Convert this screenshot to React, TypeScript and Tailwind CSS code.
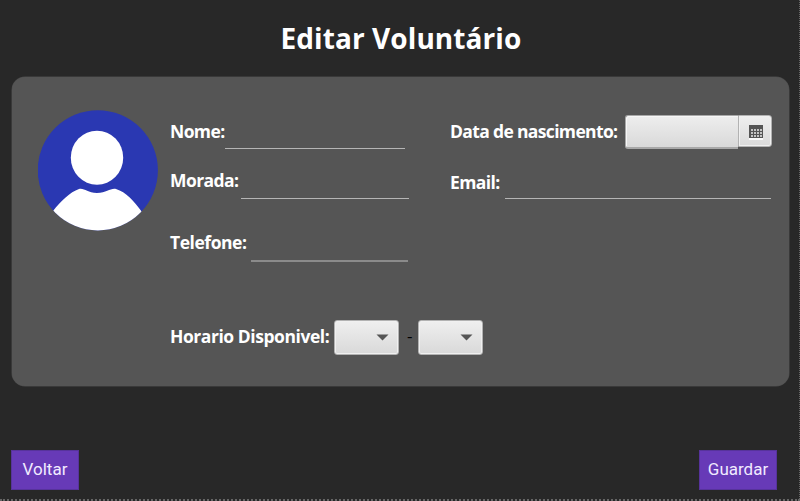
import type { ReactNode } from "react";

const labelFont = "font-['Open_Sans','Noto_Sans',sans-serif] font-bold text-white whitespace-nowrap";

function Label({ children, className }: { children: ReactNode; className: string }) {
  return <label className={`${labelFont} shrink-0 text-[17.5px] leading-6 ${className}`}>{children}</label>;
}

function TimeSelect() {
  return (
    <button className="flex h-[35px] w-[65px] shrink-0 items-center justify-end rounded-[3px] border border-[#b2b2b2] bg-linear-to-b from-[#efefef] to-[#d9d9d9] pr-[9px] shadow-[inset_0_0_0_1px_#f0f0f0]">
      <svg width="13" height="7" viewBox="0 0 13 7">
        <path d="M0.5 0.5H12.5L6.5 6.5Z" fill="#555" />
      </svg>
    </button>
  );
}

function CalendarIcon() {
  return (
    <svg width="14" height="15" viewBox="0 0 14 15" className="mt-[3px] ml-px" shapeRendering="crispEdges">
      <rect y="1" width="14" height="14" fill="#fafafa" />
      <rect width="14" height="13" fill="#555" />
      {[4, 7, 10].map((y) =>
        [1, 4, 7, 10].map((x) => (
          <rect key={`${x}-${y}`} x={x + 0.5} y={y} width="2" height="2" fill="#c4c4c4" />
        ))
      )}
    </svg>
  );
}

function Avatar() {
  return (
    <svg width="121" height="121" viewBox="0 0 121 121" className="shrink-0">
      <defs>
        <clipPath id="disc">
          <circle cx="59.8" cy="60.3" r="60.1" />
        </clipPath>
      </defs>
      <circle cx="59.8" cy="60.3" r="60.1" fill="#2a38b2" />
      <ellipse cx="59" cy="47.7" rx="26.2" ry="27" fill="#fff" />
      <path
        clipPath="url(#disc)"
        d="M15 101C23 91 32 82 41 79C47 78 49 83 59 83C69 83 72 78 78 79C88 82 96 91 104 102V122H15Z"
        fill="#fff"
      />
    </svg>
  );
}

export default function App() {
  return (
    <main className="flex h-[501px] w-[800px] flex-col overflow-hidden border-r border-b-2 border-dotted border-[#666] bg-[#282828]">
      <h1 className={`${labelFont} h-[77px] pt-[19px] pl-[280.5px] text-[28px] leading-[38px] tracking-[0.08px]`}>Editar Voluntário</h1>
      <section className="ml-3 flex h-[309px] w-[777px] shrink-0 rounded-[13px] bg-[#555] pt-[33px] pl-[26px] shadow-[0_0_0_0.5px_#4a4a4a]">
        <Avatar />
        <div className="ml-[11px] flex w-[280px] shrink-0 flex-col">
          <div className="flex h-[39px] pt-[9px]">
            <Label className="w-[55px] tracking-[-0.6px]">Nome:</Label>
            <div className="w-[180px] border-b border-[#b5b5b5]" />
          </div>
          <div className="flex h-[50px] pt-[19px]">
            <Label className="w-[71px] tracking-[-0.6px]">Morada:</Label>
            <div className="w-[168px] border-b border-[#b5b5b5]" />
          </div>
          <div className="flex h-[63px] pt-[31px]">
            <Label className="w-[81px] tracking-[-0.45px]">Telefone:</Label>
            <div className="w-[157px] border-b-2 border-[#8b8b8b]" />
          </div>
          <div className="mt-[58px] flex h-[35px]">
            <Label className="w-[164px] pt-[4px] tracking-[-0.45px]">Horario Disponivel:</Label>
            <TimeSelect />
            <span className="w-[19px] shrink-0 pt-[6px] pl-[8px] font-['Open_Sans',sans-serif] text-[17px] leading-5 text-black">-</span>
            <TimeSelect />
          </div>
        </div>
        <div className="flex w-[322px] shrink-0 flex-col">
          <div className="flex h-[39px] pt-[5px]">
            <Label className="w-[175px] pt-[4px] tracking-[-0.65px]">Data de nascimento:</Label>
            <div className="flex h-[33px] w-[147px]">
              <div className="h-[34px] w-[113px] rounded-l-[3px] border border-r-0 border-b-2 border-[#a8a8a8] bg-linear-to-b from-[#eee] to-[#d9d9d9] shadow-[inset_1px_1px_0_#f6f6f6]" />
              <button className="flex h-8 w-[34px] items-center justify-center rounded-r-[3px] border border-[#b2b2b2] bg-linear-to-b from-[#efefef] to-[#dadada] shadow-[inset_0_0_0_1px_#f0f0f0]">
                <CalendarIcon />
              </button>
            </div>
          </div>
          <div className="flex h-[50px] pt-[21px]">
            <Label className="w-[55px] tracking-[-0.6px]">Email:</Label>
            <div className="w-[266px] border-b border-[#b5b5b5]" />
          </div>
        </div>
      </section>
      <footer className="mt-[64px] flex w-[777px] shrink-0 justify-between pl-[11px] font-['Roboto',sans-serif] text-[17px] text-[#f1eaff]">
        <button className="h-10 w-[68px] border border-[#57339b] bg-[#673ab7]">Voltar</button>
        <button className="h-10 w-[78px] border border-[#57339b] bg-[#673ab7]">Guardar</button>
      </footer>
    </main>
  );
}
